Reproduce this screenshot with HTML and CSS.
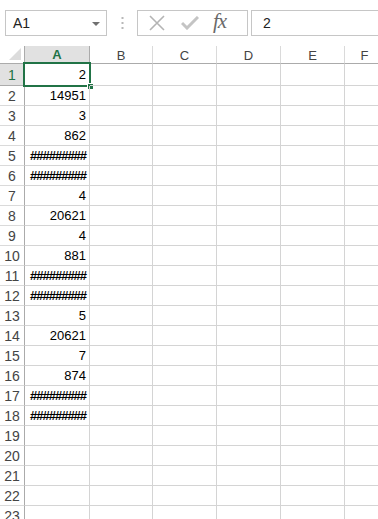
FILE: index.html
```html
<!DOCTYPE html>
<html lang="en">
  <head>
    <meta charset="UTF-8" />
    <meta name="viewport" content="width=device-width, initial-scale=1.0" />
    <title>Book1</title>
    <link rel="stylesheet" href="styles.css">
  </head>
  <body>
    <div class="toolbar">
      <div class="namebox">
        <span>A1</span>
        <span class="arrow"></span>
      </div>
      <div class="dots">
        <svg width="3" height="12" viewBox="0 0 3 12">
          <rect x="0.5" y="0" width="2" height="2" fill="#b8b8b8" />
          <rect x="0.5" y="5" width="2" height="2" fill="#b8b8b8" />
          <rect x="0.5" y="10" width="2" height="2" fill="#b8b8b8" />
        </svg>
      </div>
      <div class="fxbox">
        <svg class="icon-x" width="16" height="16" viewBox="0 0 16 16">
          <path d="M1 1 L15 15 M15 1 L1 15" stroke="#b4b4b4" stroke-width="1.6" fill="none" />
        </svg>
        <svg class="icon-ok" width="18" height="14" viewBox="0 0 18 14">
          <path d="M1 7 L6 12 L17 1" stroke="#c4c4c4" stroke-width="3" fill="none" />
        </svg>
        <span class="fx">fx</span>
      </div>
      <div class="formula">2</div>
    </div>

    <div class="sheet" id="sheet">
      <div class="corner"><span class="tri"></span></div>
      <div class="colhead active">A</div>
      <div class="colhead">B</div>
      <div class="colhead">C</div>
      <div class="colhead">D</div>
      <div class="colhead">E</div>
      <div class="colhead">F</div>
    </div>

    <script>
      // values in column A, rows 1-18
      const values = [
        "2", "14951", "3", "862", "#########", "#########",
        "4", "20621", "4", "881", "#########", "#########",
        "5", "20621", "7", "874", "#########", "#########"
      ];
      const sheet = document.getElementById("sheet");

      for (let r = 1; r <= 23; r++) {
        const head = document.createElement("div");
        head.className = r === 1 ? "rowhead active" : "rowhead";
        head.textContent = r;
        sheet.appendChild(head);

        for (let c = 0; c < 6; c++) {
          const cell = document.createElement("div");
          cell.className = "cell";
          if (c === 0 && values[r - 1]) {
            const v = values[r - 1];
            cell.textContent = v;
            if (v[0] === "#") cell.classList.add("hash");
          }
          if (r === 1 && c === 0) {
            cell.classList.add("selected");
            const handle = document.createElement("span");
            handle.className = "handle";
            cell.appendChild(handle);
          }
          sheet.appendChild(cell);
        }
      }
    </script>
  </body>
</html>
```

FILE: styles.css
```css
* {
  margin: 0;
  padding: 0;
  box-sizing: border-box;
}

body {
  font-family: "Liberation Sans", Arial, sans-serif;
  background-color: #ffffff;
  width: 378px;
  height: 519px;
  overflow: hidden;
  color: #000;
}

.toolbar {
  display: flex;
  align-items: stretch;
  height: 26px;
  margin-top: 10px;
  padding-left: 5px;
}

.namebox {
  width: 102px;
  border: 1px solid #c6c6c6;
  display: flex;
  align-items: center;
  justify-content: space-between;
  padding: 0 6px 0 7px;
  font-size: 14px;
  color: #222;
}

.arrow {
  width: 0;
  height: 0;
  border-left: 4px solid transparent;
  border-right: 4px solid transparent;
  border-top: 4px solid #707070;
  margin-top: 1px;
}

.dots {
  width: 30px;
  display: flex;
  align-items: center;
  justify-content: center;
}

.fxbox {
  width: 111px;
  border: 1px solid #c6c6c6;
  display: flex;
  align-items: center;
  padding-left: 11px;
}

.icon-x {
  margin-right: 16px;
}

.icon-ok {
  margin-right: 14px;
}

.fx {
  font-family: "Liberation Serif", "Times New Roman", serif;
  font-style: italic;
  font-size: 21px;
  color: #6a6a6a;
  letter-spacing: -1px;
  margin-top: -3px;
}

.formula {
  flex: 1;
  margin-left: 3px;
  margin-right: -4px;
  border: 1px solid #c6c6c6;
  display: flex;
  align-items: center;
  padding-left: 11px;
  font-size: 14px;
  color: #222;
}

.sheet {
  display: grid;
  grid-template-columns: 25px 65px 63px 64px 64px 64px 40px;
  grid-template-rows: 18px 22px;
  grid-auto-rows: 20px;
  margin-top: 10px;
}

.corner {
  position: relative;
  border-right: 1px solid #ababab;
  border-bottom: 1px solid #ababab;
}

.tri {
  position: absolute;
  right: 3px;
  bottom: 3px;
  width: 0;
  height: 0;
  border-left: 12px solid transparent;
  border-bottom: 12px solid #dcdcdc;
}

.colhead {
  border-right: 1px solid #dadada;
  border-bottom: 1px solid #ababab;
  font-size: 13px;
  color: #444;
  display: flex;
  align-items: center;
  justify-content: center;
  padding-top: 1px;
}

.colhead.active {
  background-color: #e1e1e1;
  color: #217346;
  font-weight: bold;
  border-bottom: 2px solid #217346;
  border-right-color: #ababab;
}

.rowhead {
  border-right: 1px solid #ababab;
  border-bottom: 1px solid #dadada;
  font-size: 14px;
  color: #444;
  display: flex;
  align-items: center;
  justify-content: center;
}

.rowhead.active {
  background-color: #e1e1e1;
  color: #217346;
  border-bottom-color: #ababab;
}

.cell {
  position: relative;
  border-right: 1px solid #d4d4d4;
  border-bottom: 1px solid #d4d4d4;
  font-size: 13px;
  display: flex;
  align-items: center;
  justify-content: flex-end;
  padding-right: 3px;
  white-space: nowrap;
  overflow: hidden;
}

.cell.hash {
  justify-content: flex-start;
  padding-left: 5px;
  letter-spacing: -1px;
  font-weight: bold;
}

.cell.selected {
  overflow: visible;
}

.cell.selected::before {
  content: "";
  position: absolute;
  left: -2px;
  top: -2px;
  right: -2px;
  bottom: -2px;
  border: 2px solid #217346;
}

.handle {
  position: absolute;
  right: -5px;
  bottom: -5px;
  width: 7px;
  height: 7px;
  background-color: #217346;
  border: 1px solid #ffffff;
}
```
